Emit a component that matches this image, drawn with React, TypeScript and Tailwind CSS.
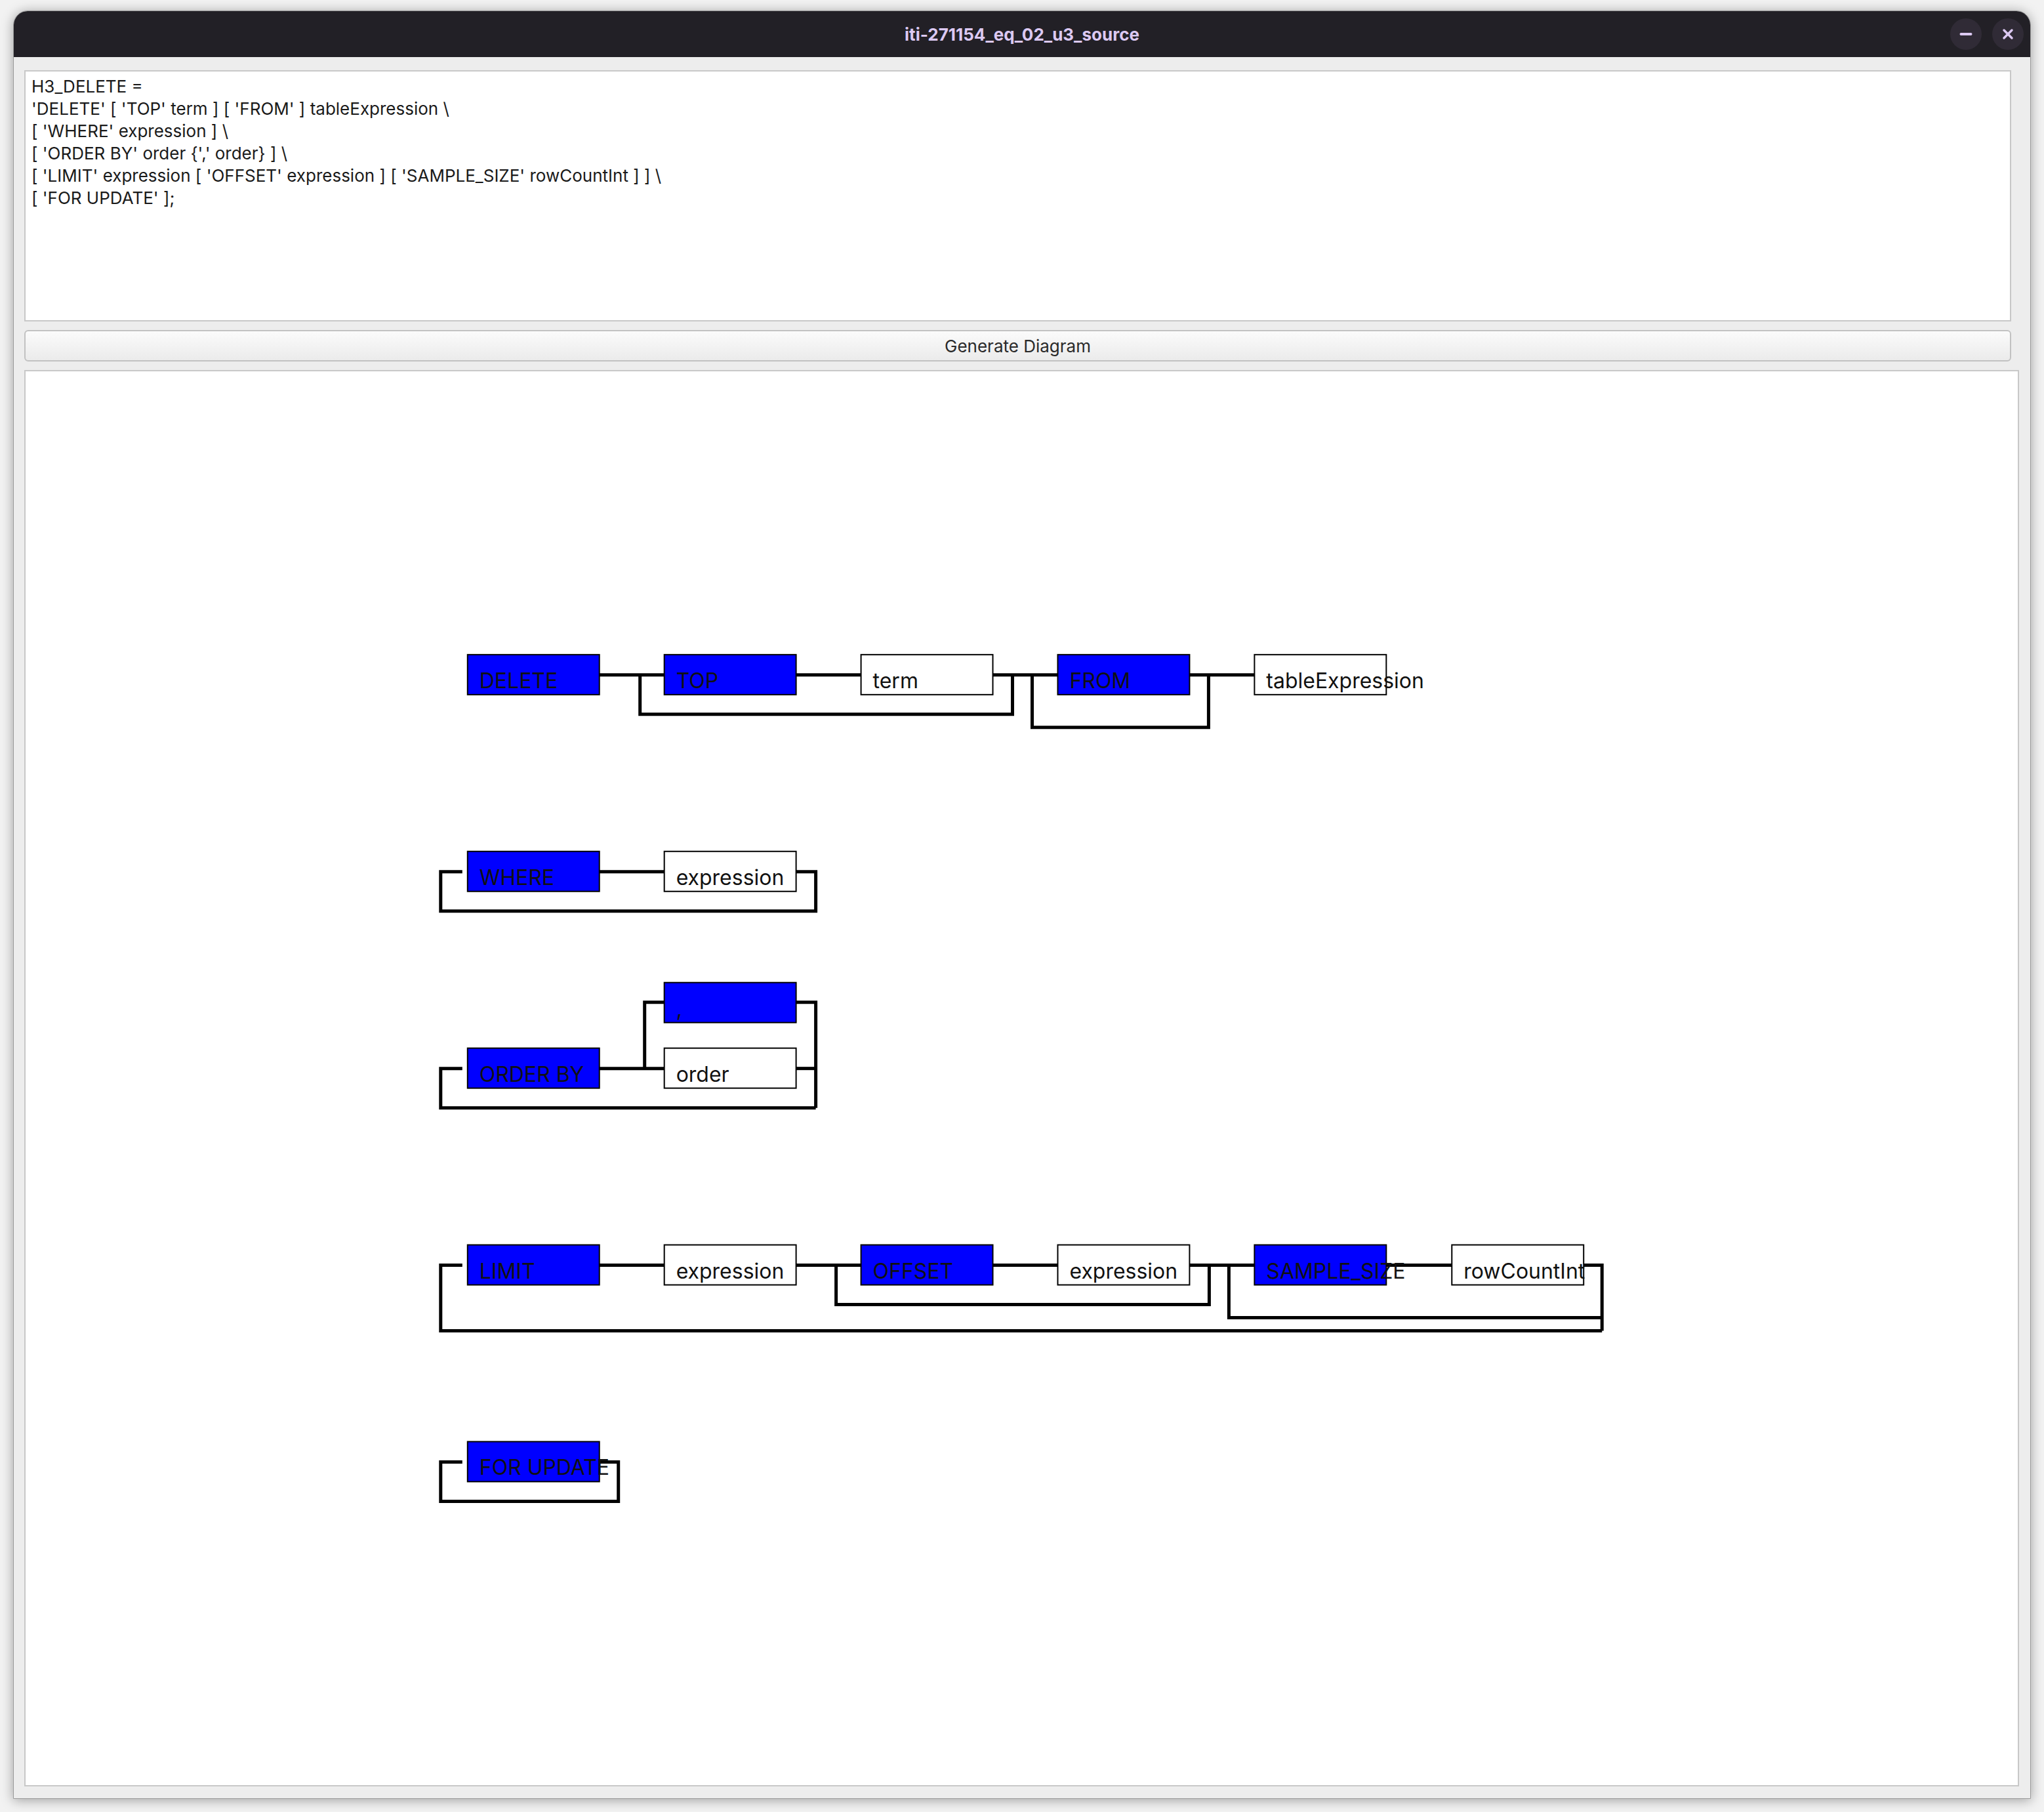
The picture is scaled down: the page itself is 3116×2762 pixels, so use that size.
import React from 'react';
import { Minus, X } from 'lucide-react';

type Box = { x: number; y: number; label: string; kw?: boolean };

const W = 201;
const H = 61;

// diagram nodes, page coordinates (svg viewBox matches the panel's position)
const boxes: Box[] = [
  { x: 712, y: 998, label: 'DELETE', kw: true },
  { x: 1012, y: 998, label: 'TOP', kw: true },
  { x: 1312, y: 998, label: 'term' },
  { x: 1612, y: 998, label: 'FROM', kw: true },
  { x: 1912, y: 998, label: 'tableExpression' },

  { x: 712, y: 1298, label: 'WHERE', kw: true },
  { x: 1012, y: 1298, label: 'expression' },

  { x: 1012, y: 1498, label: ',', kw: true },
  { x: 712, y: 1598, label: 'ORDER BY', kw: true },
  { x: 1012, y: 1598, label: 'order' },

  { x: 712, y: 1898, label: 'LIMIT', kw: true },
  { x: 1012, y: 1898, label: 'expression' },
  { x: 1312, y: 1898, label: 'OFFSET', kw: true },
  { x: 1612, y: 1898, label: 'expression' },
  { x: 1912, y: 1898, label: 'SAMPLE_SIZE', kw: true },
  { x: 2213, y: 1898, label: 'rowCountInt' },

  { x: 712, y: 2198, label: 'FOR UPDATE', kw: true },
];

const wires: string[] = [
  // row 1
  '913,1029 1012,1029',
  '1213,1029 1312,1029',
  '1513,1029 1612,1029',
  '1813,1029 1912,1029',
  '975,1029 975,1089 1543,1089 1543,1029',
  '1573,1029 1573,1109 1842,1109 1842,1029',
  // where
  '913,1329 1012,1329',
  '704,1329 671,1329 671,1389 1243,1389 1243,1329 1213,1329',
  // order by
  '913,1629 1012,1629',
  '982,1629 982,1528 1012,1528',
  '1213,1528 1243,1528 1243,1689',
  '1213,1629 1243,1629',
  '704,1629 671,1629 671,1689 1243,1689',
  // limit
  '913,1929 1012,1929',
  '1213,1929 1312,1929',
  '1513,1929 1612,1929',
  '1813,1929 1912,1929',
  '2113,1929 2213,1929',
  '1274,1929 1274,1989 1843,1989 1843,1929',
  '1873,1929 1873,2009 2442,2009',
  '2414,1929 2442,1929 2442,2029',
  '704,1929 671,1929 671,2029 2442,2029',
  // for update
  '704,2229 671,2229 671,2289 942,2289 942,2229 913,2229',
];

const source = `H3_DELETE =
'DELETE' [ 'TOP' term ] [ 'FROM' ] tableExpression \\
[ 'WHERE' expression ] \\
[ 'ORDER BY' order {',' order} ] \\
[ 'LIMIT' expression [ 'OFFSET' expression ] [ 'SAMPLE_SIZE' rowCountInt ] ] \\
[ 'FOR UPDATE' ];`;

function Diagram() {
  return (
    <svg className="block w-full h-full" viewBox="38 566 3038 2156" preserveAspectRatio="xMinYMin slice">
      {wires.map((p, i) => (
        <polyline key={i} points={p} fill="none" stroke="#000" strokeWidth={5} strokeLinejoin="miter" />
      ))}
      {boxes.map((b, i) => (
        <g key={i}>
          <rect x={b.x} y={b.y} width={W} height={H} fill={b.kw ? '#0000ff' : '#ffffff'} stroke="#000" strokeWidth={2} />
          <text x={b.x + 18} y={b.y + 51} fontSize={32} fill="#111" style={{ fontFamily: 'Inter, "Noto Sans", sans-serif' }}>
            {b.label}
          </text>
        </g>
      ))}
    </svg>
  );
}

export default function App() {
  return (
    <div className="w-[3116px] h-[2762px] bg-[#f2f2f2] pt-[16px] pl-[20px] font-['Inter','Noto_Sans',sans-serif]">
      <div className="w-[3076px] h-[2726px] flex flex-col rounded-t-[22px] overflow-hidden shadow-[0_2px_18px_rgba(0,0,0,0.35)] border border-[#9a9a9a]">
        {/* title bar */}
        <div className="h-[70px] shrink-0 bg-[#222026] flex items-center relative">
          <div className="flex-1 text-center text-[26px] font-bold text-[#dcc9f2]">iti-271154_eq_02_u3_source</div>
          <div className="absolute right-[10px] top-[11px] flex gap-[16px]">
            <div className="w-[48px] h-[48px] rounded-full bg-[#302b36] flex items-center justify-center text-[#dcc9f2]">
              <Minus size={26} strokeWidth={3.5} />
            </div>
            <div className="w-[48px] h-[48px] rounded-full bg-[#302b36] flex items-center justify-center text-[#dcc9f2]">
              <X size={24} strokeWidth={3.5} />
            </div>
          </div>
        </div>

        {/* body */}
        <div className="flex-1 bg-[#ededed] pl-[16px] pr-[17px] pt-[20px] pb-[18px] flex flex-col gap-[13px]">
          <div className="h-[383px] mr-[12px] bg-white border-2 border-[#c8c8c8] pl-[9px] pt-[6px] text-[26px] leading-[34px] text-[#1a1a1a] whitespace-pre">
            {source}
          </div>
          <div className="h-[48px] mr-[12px] rounded-[6px] border-2 border-[#c2c2c2] bg-gradient-to-b from-[#fbfbfb] to-[#ebebeb] flex items-center justify-center text-[26px] text-[#2a2a2a]">
            Generate Diagram
          </div>
          <div className="flex-1 bg-white border-2 border-[#c8c8c8] overflow-hidden">
            <Diagram />
          </div>
        </div>
      </div>
    </div>
  );
}
